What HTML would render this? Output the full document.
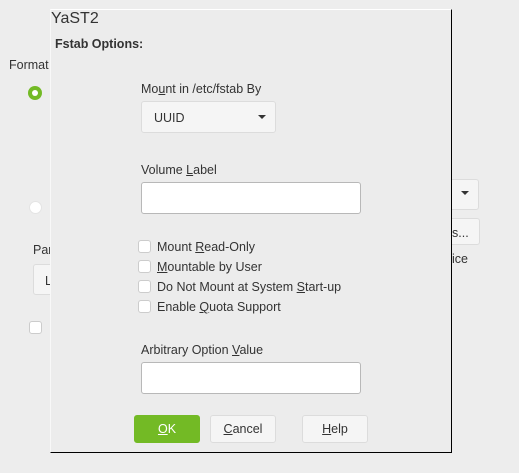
<!DOCTYPE html>
<html><head><style>
body{margin:0;width:519px;height:473px;background:#ededed;font-family:"Liberation Sans",sans-serif;font-size:12.5px;color:#333;position:relative;overflow:hidden}
.a{position:absolute;white-space:nowrap}
.t{margin-top:1px}
.box{position:absolute;background:#fff;border:1px solid #b8b8b8;border-radius:3px;box-sizing:border-box}
.btn{position:absolute;background:#f5f5f5;border:1px solid #dcdcdc;border-radius:3px;box-sizing:border-box;text-align:center}
.cb{position:absolute;width:13px;height:13px;border:1px solid #ccc;border-radius:3px;background:#fff;box-sizing:border-box}
u{text-decoration:underline}
</style></head><body>
<div class="a" style="left:9px;top:58px">Format</div>
<div class="a" style="left:28px;top:86px;width:14px;height:14px;border-radius:50%;background:#73ba25"></div>
<div class="a" style="left:32px;top:90px;width:6px;height:6px;border-radius:50%;background:#fff"></div>
<div class="a" style="left:29px;top:201px;width:13px;height:13px;border-radius:50%;background:#fff;border:1px solid #e4e4e4;box-sizing:border-box"></div>
<div class="a" style="left:33px;top:243px">Par</div>
<div class="btn" style="left:33px;top:264px;width:30px;height:31px;background:#f5f5f5"></div>
<div class="a" style="left:45px;top:274px">L</div>
<div class="cb" style="left:29px;top:321px"></div>
<div class="btn" style="left:440px;top:179px;width:39px;height:31px"></div>
<div class="a" style="left:461px;top:191px;border-left:4px solid transparent;border-right:4px solid transparent;border-top:4px solid #333"></div>
<div class="btn" style="left:440px;top:218px;width:40px;height:27px"></div>
<div class="a" style="left:452px;top:226px">s...</div>
<div class="a" style="left:452px;top:252px">ice</div>
<div class="a" style="left:50px;top:9px;width:402px;height:444px;background:#ececec;border-top:1px solid #fff;border-left:1px solid #f8f8f8;border-right:1px solid #000;border-bottom:1px solid #000;box-sizing:border-box"></div>
<div class="a" style="left:51px;top:10px;font-size:16px">YaST2</div>
<div class="a" style="left:55px;top:37px;font-weight:bold;font-size:12.5px">Fstab Options:</div>
<div class="a" style="left:141px;top:82px">Mo<u>u</u>nt in /etc/fstab By</div>
<div class="btn" style="left:141px;top:101px;width:135px;height:32px"></div>
<div class="a" style="left:154px;top:111px">UUID</div>
<div class="a" style="left:258px;top:115px;border-left:4px solid transparent;border-right:4px solid transparent;border-top:4px solid #333"></div>
<div class="a" style="left:141px;top:163px">Volume <u>L</u>abel</div>
<div class="box" style="left:141px;top:182px;width:220px;height:32px"></div>
<div class="cb" style="left:138px;top:240px"></div><div class="a" style="left:157px;top:240px">Mount <u>R</u>ead-Only</div>
<div class="cb" style="left:138px;top:260px"></div><div class="a" style="left:157px;top:260px"><u>M</u>ountable by User</div>
<div class="cb" style="left:138px;top:280px"></div><div class="a" style="left:157px;top:280px">Do Not Mount at System <u>S</u>tart-up</div>
<div class="cb" style="left:138px;top:300px"></div><div class="a" style="left:157px;top:300px">Enable <u>Q</u>uota Support</div>
<div class="a" style="left:141px;top:343px">Arbitrary Option <u>V</u>alue</div>
<div class="box" style="left:141px;top:362px;width:220px;height:32px"></div>
<div class="btn" style="left:134px;top:415px;width:66px;height:28px;background:#73ba25;border-color:#73ba25;color:#fff;line-height:27px"><u>O</u>K</div>
<div class="btn" style="left:210px;top:415px;width:66px;height:28px;line-height:27px"><u>C</u>ancel</div>
<div class="btn" style="left:302px;top:415px;width:66px;height:28px;line-height:27px"><u>H</u>elp</div>
</body></html>
